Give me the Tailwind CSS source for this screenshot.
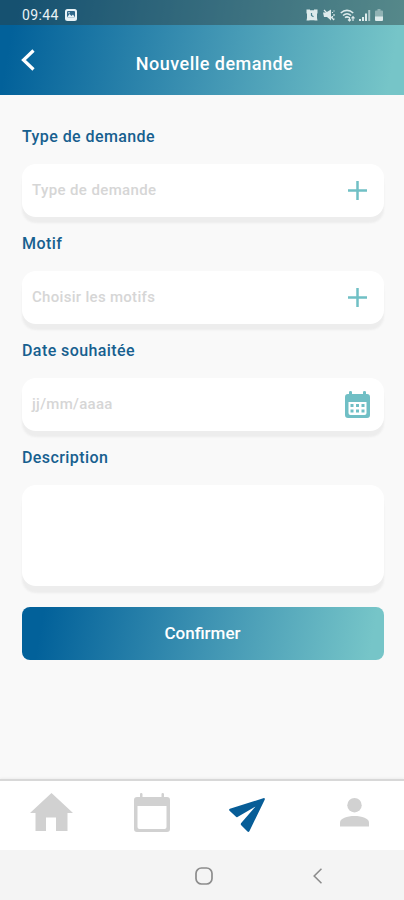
<!DOCTYPE html>
<html lang="fr">
<head>
<meta charset="utf-8">
<meta name="viewport" content="width=device-width, initial-scale=1">
<title>Nouvelle demande</title>
<script src="https://cdn.jsdelivr.net/npm/@tailwindcss/browser@4"></script>
</head>
<body class="flex h-[900px] w-[404px] flex-col overflow-hidden bg-[#f9f9f9] font-['Roboto',sans-serif]">
<header class="h-[95px] shrink-0 bg-[linear-gradient(100deg,#02619a_4%,#3d92b2_50%,#76c5c8_96%)] text-white">
  <div class="flex h-[25px] items-center bg-[#2f3e3e]/45 pt-[5px] pr-[21px] pl-[22px]">
    <span class="text-[14px] leading-[20px] tracking-[0.4px] text-[#e8f2f6]">09:44</span>
    <svg class="ml-[6px] h-[12px] w-[12px]" viewBox="0 0 12 12"><rect width="12" height="12" rx="2.500" fill="#e8f2f6"/><rect x="2" y="2" width="8" height="6.500" rx="1" fill="#30688a"/><path d="M2 8.500 4.500 5l2 2L8 5.500l2 3Z" fill="#e8f2f6"/><circle cx="4" cy="3.700" r=".8" fill="#e8f2f6"/></svg>
    <div class="ml-auto flex items-center text-[#deebec]">
      <svg class="h-[12px] w-[12px]" viewBox="0 0 12 12" fill="currentColor"><path d="M.5.500h3.500v.8h4V.5h3.500V4l-.5 1v4l.5 2.500H9l-1-.3H4l-1 .3H.5L1 9V5L.5 4Z"/><path d="M5.500 4v2.500l2 1.300" fill="none" stroke="#4b8491" stroke-width="1.200"/></svg>
      <svg class="ml-[5px] h-[12px] w-[12px]" viewBox="0 0 12 12" fill="currentColor" stroke="currentColor"><path d="M0 3.500h3l5-3v11l-4-3.500H1Z" stroke="none"/><path d="m1 1 10 10M9.500 3v1M11 1.500v1M9.500 7v1.500M11 5v2M11 9.500v1" stroke-width="1.200"/></svg>
      <svg class="ml-[5px] h-[13px] w-[16px]" viewBox="0 0 16 13" fill="none" stroke="currentColor" stroke-width="1.600"><path d="M.8 4C4.500.5 9.500.5 13.200 4M3 6.500c2.500-2.200 5.500-2.200 8 0M5 8.700c1.200-1 2.800-1 4 0"/><path d="M9.500 8v4M8 10.500 9.500 12l1.500-1.500M13 12V8m-1.500 1.300L13 7.700l1.500 1.600" stroke-width="1.200"/></svg>
      <svg class="ml-[3px] h-[12px] w-[12px]" viewBox="0 0 12 12" fill="currentColor"><path d="M0 10h2v2H0zM3 8h2v4H3z"/><path d="M6 4.500h2V12H6z"/><path d="M9.200 1h2v11h-2z" opacity=".65"/></svg>
      <svg class="ml-[4px] h-[12px] w-[8px]" viewBox="0 0 8 12" fill="currentColor"><path d="M2.500 0h3v1.500H7q1 0 1 1V8H0V2.500q0-1 1-1h1.500Z" opacity=".45"/><path d="M0 7.500h8V11q0 1-1 1H1q-1 0-1-1Z"/></svg>
    </div>
  </div>
  <div class="grid h-[70px] grid-cols-[48px_1fr_23px] items-center">
    <svg class="ml-[21px] h-[22px] w-[14px]" viewBox="0 0 14 22" fill="none" stroke="white" stroke-width="3.200"><path d="M12.500 1.500 2.500 11l10 9.500"/></svg>
    <h1 class="pt-[7px] text-center text-[18px] leading-[24px] font-medium tracking-[0.48px] whitespace-nowrap">Nouvelle demande</h1>
  </div>
</header>

<main class="flex min-h-0 flex-1 flex-col pt-[31px] pr-[20px] pl-[22px] text-[#17608f]">
  <label class="h-[38px] text-[16px] leading-[22px] font-medium tracking-[0.42px]">Type de demande</label>
  <div class="mb-[16px] flex h-[53px] shrink-0 items-center justify-between rounded-[14px] bg-white pr-[17px] pl-[10px] shadow-[0_6px_2px_#ededed]">
    <span class="text-[15px] font-medium tracking-[0.38px] text-[#d6d6d6]">Type de demande</span>
    <svg class="mb-[1px] h-[19px] w-[19px]" viewBox="0 0 19 19" fill="none" stroke="#70c0c5" stroke-width="2.500"><path d="M9.500 0v19M0 9.500h19"/></svg>
  </div>
  <label class="h-[38px] text-[16px] leading-[22px] font-medium tracking-[0.42px]">Motif</label>
  <div class="mb-[16px] flex h-[53px] shrink-0 items-center justify-between rounded-[14px] bg-white pr-[17px] pl-[10px] shadow-[0_6px_2px_#ededed]">
    <span class="text-[15px] font-medium tracking-[0.3px] text-[#d6d6d6]">Choisir les motifs</span>
    <svg class="mb-[1px] h-[19px] w-[19px]" viewBox="0 0 19 19" fill="none" stroke="#70c0c5" stroke-width="2.500"><path d="M9.500 0v19M0 9.500h19"/></svg>
  </div>
  <label class="h-[38px] text-[16px] leading-[22px] font-medium tracking-[0.42px]">Date souhaitée</label>
  <div class="mb-[16px] flex h-[53px] shrink-0 items-center justify-between rounded-[14px] bg-white pr-[14px] pl-[10px] shadow-[0_6px_2px_#ededed]">
    <span class="text-[15px] font-medium tracking-[0.3px] text-[#d6d6d6]">jj/mm/aaaa</span>
    <svg class="h-[28px] w-[25px]" viewBox="0 0 25 28"><path d="M4 3V1q0-1 1.500-1T7 1v2h11V1q0-1 1.500-1T21 1v2h1q3 0 3 3v18q0 3-3 3H3q-3 0-3-3V6q0-3 3-3Z" fill="#70bfc5"/><path d="M3.500 11h18v11q0 2-2 2h-14q-2 0-2-2Z" fill="white"/><path d="M5.500 13h3v3h-3zm5.500 0h3v3h-3zm5.500 0h3v3h-3zm-11 5.500h3v3h-3zm5.500 0h3v3h-3zm5.500 0h3v3h-3z" fill="#70bfc5"/></svg>
  </div>
  <label class="h-[38px] text-[16px] leading-[22px] font-medium tracking-[0.42px]">Description</label>
  <div class="mb-[21px] h-[101px] shrink-0 rounded-[14px] bg-white shadow-[0_7px_2px_#ededed]"></div>
  <button class="h-[53px] shrink-0 rounded-[8px] bg-[linear-gradient(100deg,#02619a_6%,#3d92b2_50%,#76c5c8_96%)] pt-[1px] pr-[1px] text-[17px] font-medium text-white">Confirmer</button>
</main>

<nav class="flex h-[71px] shrink-0 items-start border-t-2 border-[#d8d8d8] bg-white shadow-[0_-1px_2px_#ededed]">
  <svg class="mt-[12px] ml-[30px] h-[38px] w-[43px]" viewBox="0 0 43 38" fill="#d1d1d1"><path d="M21.500 0 43 20h-5.500v18H26V24.500H16V38H5.500V20H0Z"/></svg>
  <svg class="mt-[12px] ml-[61px] h-[39px] w-[36px]" viewBox="0 0 36 39"><path d="M6 4V1q0-1 1.200-1T8.500 1v3h19V1q0-1 1.200-1T30 1v3h3q3 0 3 3v29q0 3-3 3H3q-3 0-3-3V7q0-3 3-3Z" fill="#d1d1d1"/><path d="M3.500 13h29v21q0 2-2 2h-25q-2 0-2-2Z" fill="white"/></svg>
  <svg class="mt-[17px] ml-[59px] h-[34px] w-[36px]" viewBox="0 0 36 34" fill="#075d97"><path d="M35 0q1 0 .8 1.500L20.500 33q-1 1.500-2 .5L12 27q-.5-.9.200-2L26.500 8.500 8.500 19q-1 .5-1.500-.3L.3 12.500q-.6-1.200.6-1.700Z"/></svg>
  <svg class="mt-[17px] ml-[75px] h-[29px] w-[29px]" viewBox="0 0 29 29" fill="#d1d1d1"><circle cx="14.500" cy="7.200" r="7.200"/><path d="M0 28.500v-4C0 20.500 7 18 14.500 18S29 20.500 29 24.500v4Z"/></svg>
</nav>
<div class="flex h-[50px] shrink-0 items-center bg-[#f4f4f4] pt-[2px]">
  <svg class="ml-[195px] h-[18px] w-[18px]" viewBox="0 0 18 18" fill="none" stroke="#8c8c8c" stroke-width="1.700"><rect x="1" y="1" width="16" height="16" rx="5.500"/></svg>
  <svg class="ml-[100px] h-[16px] w-[9px]" viewBox="0 0 9 16" fill="none" stroke="#8c8c8c" stroke-width="1.600"><path d="M8.500.7 1.200 8l7.300 7.300"/></svg>
</div>
</body>
</html>
